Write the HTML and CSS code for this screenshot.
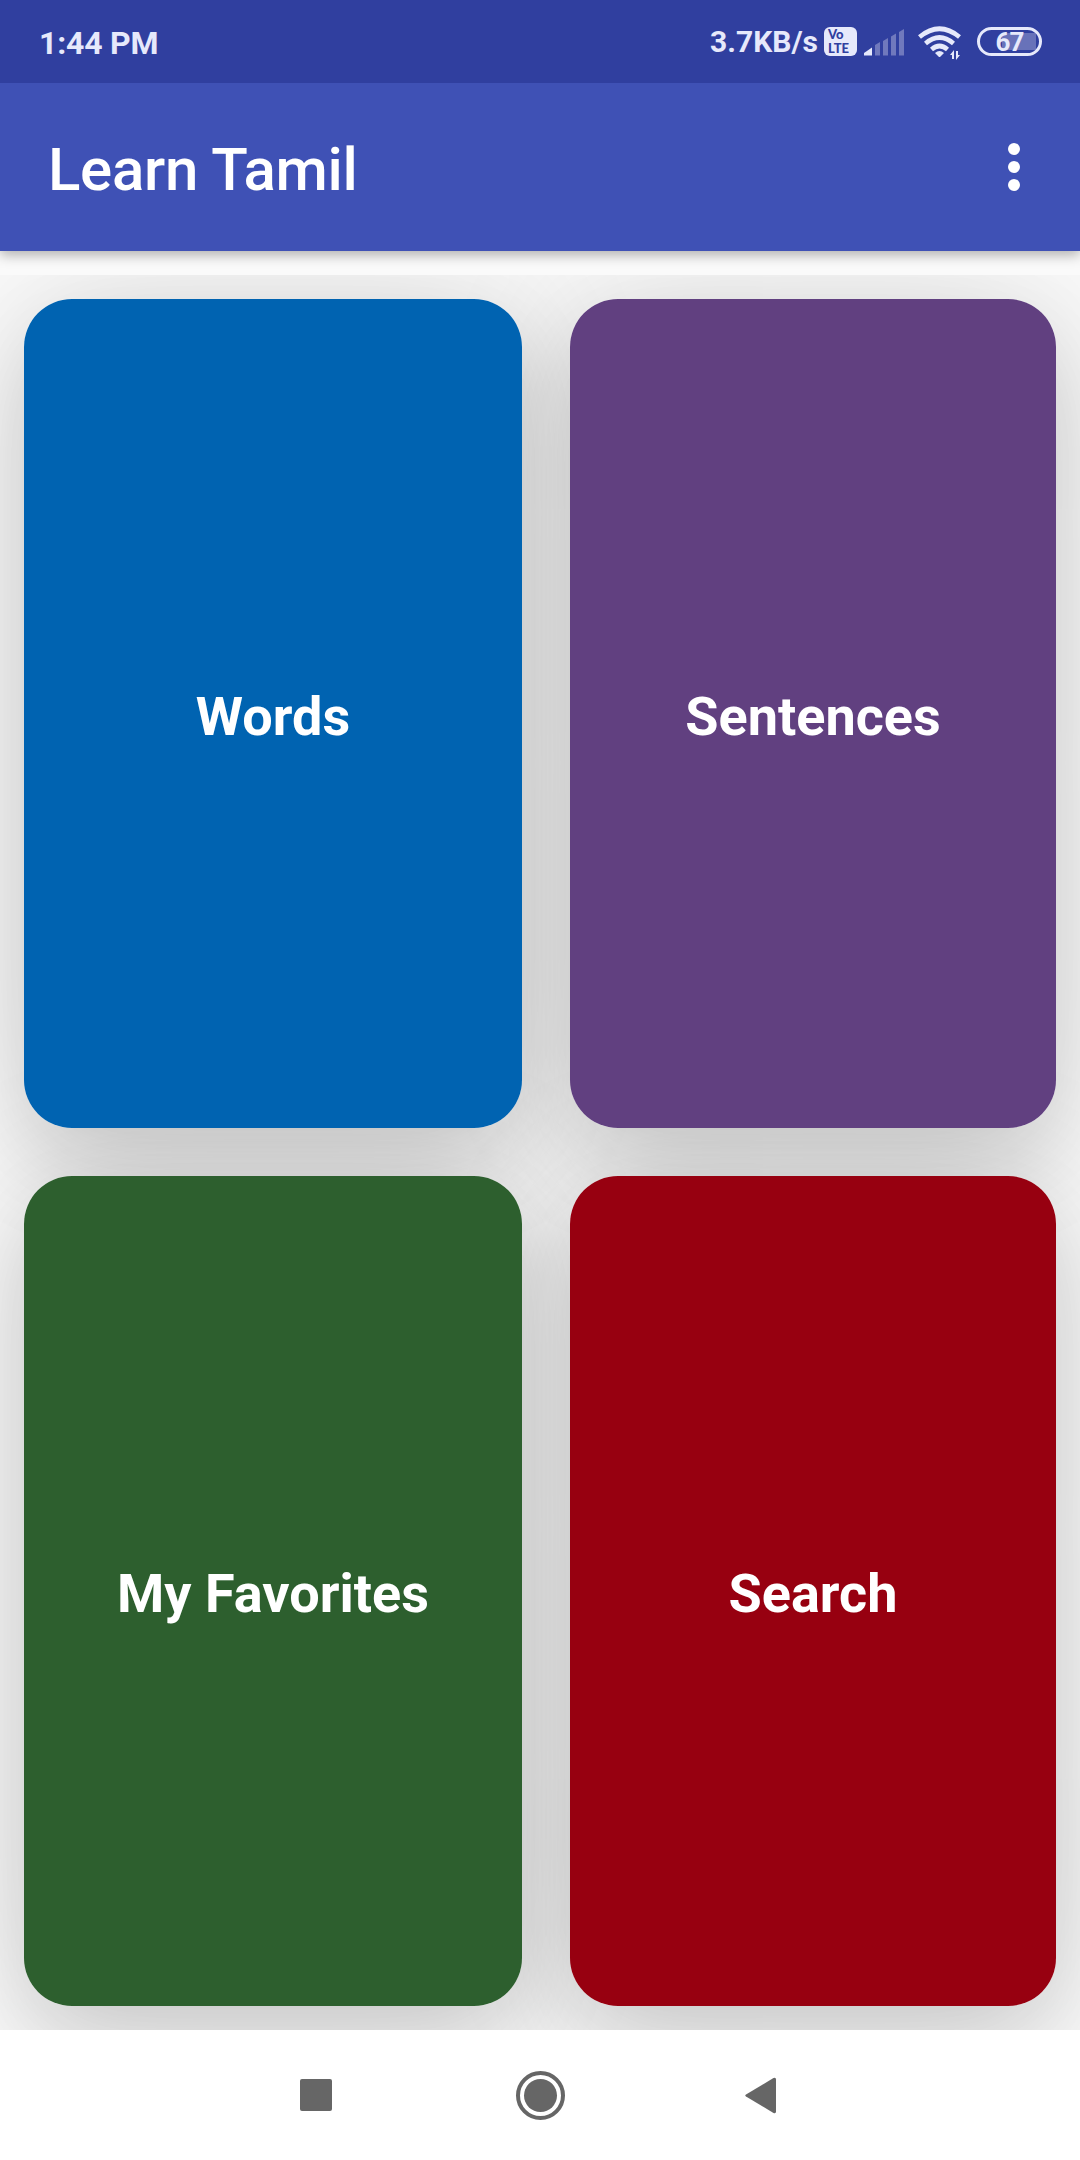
FILE: index.html
```html
<!DOCTYPE html>
<html lang="en">
<head>
  <meta charset="UTF-8">
  <title>Learn Tamil</title>
  <link rel="stylesheet" href="styles.css">
</head>
<body>
  <div class="status-bar">
    <span class="time">1:44 PM</span>
    <div class="status-icons">
      <span class="speed">3.7KB/s</span>
      <div class="volte"><span>Vo</span><span>LTE</span></div>
      <svg class="signal" width="41" height="30" viewBox="0 0 41 30">
        <path class="on" d="M0 28.5 V26 L8 20.5 V28.5 Z"/>
        <path class="off" d="M11 28.5 V18 L16 15 V28.5 Z M19 28.5 V14 L24 11 V28.5 Z M27 28.5 V9.5 L32 6.5 V28.5 Z"/>
        <path class="off" d="M35 28.5 V5 L40 2 V28.5 Z"/>
      </svg>
      <svg class="wifi" width="43" height="34" viewBox="0 0 43 34">
        <path class="arc" d="M1.5 11 Q21.5 -5.5 41.5 11"/>
        <path class="arc" d="M7.5 17.5 Q21.5 5.5 35.5 17.5"/>
        <path class="arc" d="M13.5 23.5 Q21.5 16.5 29.5 23.5"/>
        <path class="on" d="M17 27 Q21.5 23 26 27 L22.5 30.5 Q21.5 31.5 20.5 30.5 Z"/>
        <path class="on" d="M36 24 V33 H34 V29 H32 Z M38 34 V25 H40 V29 H42 Z"/>
      </svg>
      <div class="battery"><span>67</span></div>
    </div>
  </div>

  <header class="app-bar">
    <h1>Learn Tamil</h1>
    <div class="menu"><i></i><i></i><i></i></div>
  </header>

  <main class="content">
    <div class="grid">
      <div class="card words">Words</div>
      <div class="card sentences">Sentences</div>
      <div class="card favorites">My Favorites</div>
      <div class="card search">Search</div>
    </div>
  </main>

  <nav class="nav-bar">
    <svg width="540" height="60" viewBox="0 0 540 60">
      <rect x="30" y="13" width="32" height="32" rx="2"/>
      <circle class="ring" cx="270.5" cy="29.5" r="22.5"/>
      <circle cx="270.5" cy="29.5" r="16.5"/>
      <path d="M476 28.5 Q474.5 29.5 476 30.5 L503.5 47 Q506 48 506 45.5 V13.5 Q506 11 503.5 12 Z"/>
    </svg>
  </nav>
</body>
</html>
```

FILE: styles.css
```css
* {
  box-sizing: border-box;
}

body {
  margin: 0;
  width: 1080px;
  height: 2160px;
  display: flex;
  flex-direction: column;
  overflow: hidden;
  font-family: Roboto, "Noto Sans", sans-serif;
  background-color: #fafafa;
}

.status-bar {
  position: relative;
  z-index: 2;
  height: 83px;
  padding: 0 38px 0 39px;
  display: flex;
  justify-content: space-between;
  align-items: center;
  background-color: #303f9f;
  color: #e6e9fb;
}

.time,
.speed {
  padding-top: 2px;
  font-size: 32px;
  font-weight: bold;
  line-height: 40px;
}

.time {
  letter-spacing: -0.2px;
}

.status-icons {
  display: flex;
  align-items: center;
}

.speed {
  padding-top: 0;
  font-size: 30px;
}

.volte {
  width: 33px;
  height: 29px;
  margin: 0 7px 0 6px;
  padding: 1px 4px;
  border-radius: 6px;
  background-color: #e6e9fb;
  color: #303f9f;
  font-family: Lato, sans-serif;
  font-size: 13px;
  font-weight: 900;
  line-height: 13.5px;
  display: flex;
  flex-direction: column;
}

.on {
  fill: #e6e9fb;
}

.off {
  fill: #7079bd;
}

.arc {
  fill: none;
  stroke: #e6e9fb;
  stroke-width: 4.6;
}

.wifi {
  margin: 3px 16px 0 13px;
}

.battery {
  width: 65px;
  height: 29px;
  border: 3px solid #e6e9fb;
  border-radius: 15px;
  display: flex;
  justify-content: center;
  background: linear-gradient(to right, #6872b9, #6872b9) no-repeat 22px 3px / 34px 17px;
  font-size: 26px;
  font-weight: bold;
  letter-spacing: -1px;
  line-height: 25px;
}

.app-bar {
  position: relative;
  z-index: 1;
  height: 168px;
  padding: 0 60px 0 48px;
  display: flex;
  justify-content: space-between;
  align-items: center;
  background-color: #3f51b5;
  color: #fff;
  box-shadow: 0 4px 12px rgba(0, 0, 0, 0.3);
}

.app-bar h1 {
  margin: 4px 0 0;
  font-size: 60px;
  font-weight: 500;
  letter-spacing: -0.3px;
}

.menu {
  display: flex;
  flex-direction: column;
  gap: 6px;
}

.menu i {
  width: 12px;
  height: 12px;
  border-radius: 50%;
  background-color: #fff;
}

.content {
  flex: 1;
  padding-top: 24px;
}

.grid {
  position: relative;
  z-index: 0;
  height: 1755px;
  padding: 24px;
  display: grid;
  grid-template-columns: 498px 486px;
  grid-template-rows: 829px 830px;
  gap: 48px;
  overflow: hidden;
}

.card {
  position: relative;
  padding-top: 5px;
  display: flex;
  justify-content: center;
  align-items: center;
  border-radius: 48px;
  color: #fff;
  font-size: 54px;
  font-weight: bold;
}

/* shadows stay behind every card */
.card::before {
  content: "";
  position: absolute;
  inset: 0;
  z-index: -1;
  border-radius: 48px;
  box-shadow: 0 45px 90px rgba(0, 0, 0, 0.12), 0 0 140px rgba(0, 0, 0, 0.13);
}

.words {
  background-color: #0063b1;
}

.sentences {
  background-color: #614080;
}

.favorites {
  background-color: #2d5f2e;
}

.search {
  background-color: #970010;
}

.nav-bar {
  height: 130px;
  padding-top: 36px;
  display: flex;
  justify-content: center;
  background-color: #fff;
  fill: #666;
}

.nav-bar .ring {
  fill: none;
  stroke: #666;
  stroke-width: 4;
}
```
